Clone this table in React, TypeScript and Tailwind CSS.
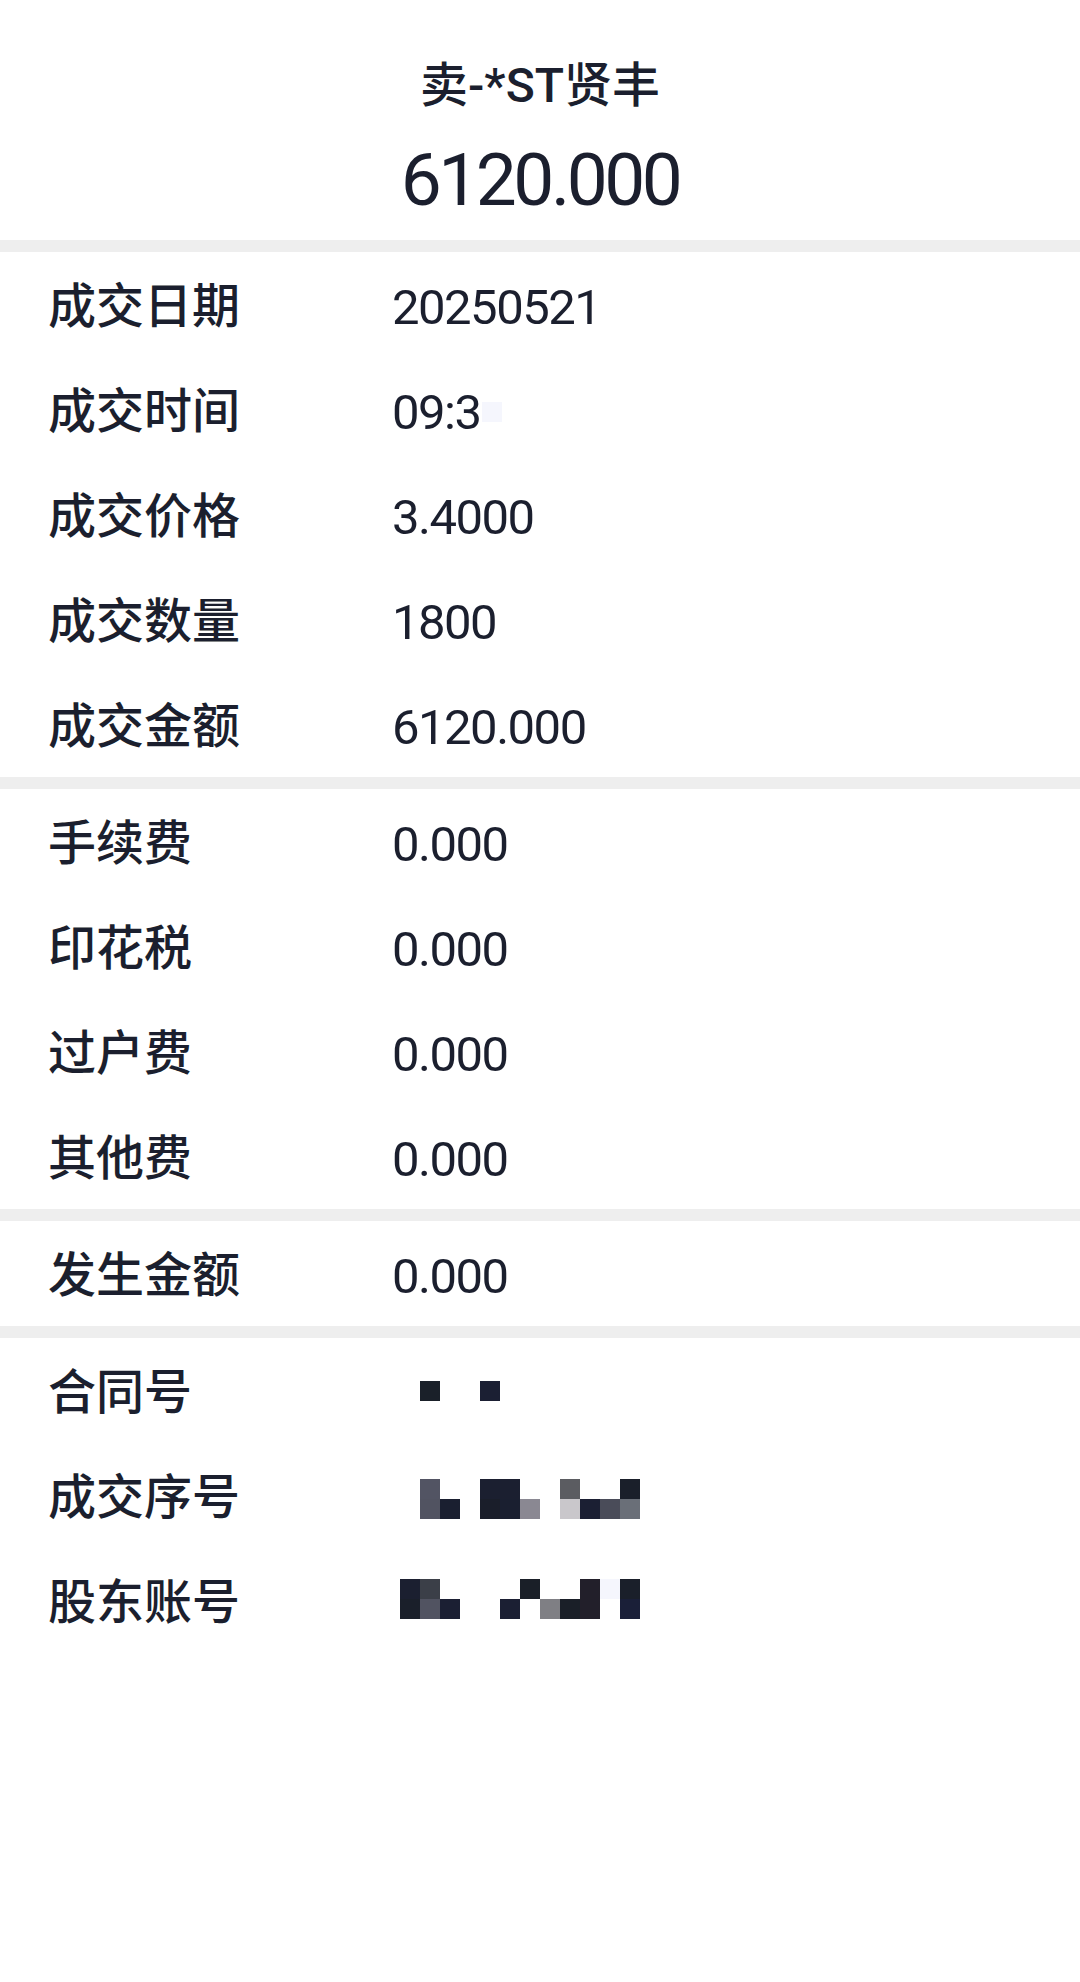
import React from 'react';

const font = "font-['Roboto','Noto_Sans_CJK_SC',sans-serif]";

type Cell = [number, number, string]; // col, row, colour

const Mosaic = ({ cells, rows = 2, className = "" }: { cells: Cell[]; rows?: number; className?: string }) => (
  <div className={`relative w-[260px] ${rows === 2 ? 'h-[40px]' : 'h-[20px]'} ${className}`}>
    {cells.map(([c, r, color], i) => (
      <div
        key={i}
        className="absolute w-[20px] h-[20px]"
        style={{ left: c * 20, top: r * 20, background: color }}
      />
    ))}
  </div>
);

const Row = ({ label, children }: { label: string; children: React.ReactNode }) => (
  <div className="flex h-[105px] items-center pl-[48px] pt-[5px]">
    <div className="w-[344px] text-[48px] font-medium leading-none text-[#1b1f2e]">{label}</div>
    <div className="flex-1 flex items-center">{children}</div>
  </div>
);

const Val = ({ children }: { children: React.ReactNode }) => (
  <span className="text-[49px] leading-none tracking-[-1.5px] text-[#1b1f2e]">{children}</span>
);

const Sep = () => <div className="h-[12px] bg-[#eeeeee]" />;

const hetong: Cell[] = [
  [1, 0, '#1a2029'],
  [4, 0, '#1b1f33'],
];

const xuhao: Cell[] = [
  [1, 0, '#525463'], [1, 1, '#515361'],
  [2, 1, '#1a1f30'],
  [4, 0, '#1b1f30'], [4, 1, '#1a1e2a'],
  [5, 0, '#1b1f30'], [5, 1, '#1a1f30'],
  [6, 1, '#8a8892'],
  [8, 0, '#5b5c61'], [8, 1, '#c9c7cb'],
  [9, 1, '#1b1f33'],
  [10, 1, '#4a4c59'],
  [11, 0, '#1a1f2a'], [11, 1, '#6a6f78'],
];

const gudong: Cell[] = [
  [0, 0, '#1b1f30'], [0, 1, '#1a1f2a'],
  [1, 0, '#3b3f48'], [1, 1, '#515361'],
  [2, 1, '#1b1f33'],
  [5, 1, '#1b1f33'],
  [6, 0, '#1a1f28'],
  [7, 1, '#7f7f84'],
  [8, 1, '#1a1f28'],
  [9, 0, '#221f2a'], [9, 1, '#221f2a'],
  [10, 0, '#f5f6fd'],
  [11, 0, '#1a1f2a'], [11, 1, '#1a1f38'],
];

export default function App() {
  return (
    <div className={`w-[1080px] min-h-[1982px] bg-white ${font}`}>
      {/* header */}
      <div className="h-[240px] flex flex-col items-center">
        <div className="mt-[62px] text-[48px] font-medium leading-none text-[#1b1f2e]">卖-*ST贤丰</div>
        <div className="mt-[34px] text-[73px] leading-none tracking-[-3.5px] text-[#1b1f2e]">6120.000</div>
      </div>
      <Sep />
      <Row label="成交日期"><Val>20250521</Val></Row>
      <Row label="成交时间">
        <Val>09:3</Val>
        <span className="ml-[2px] inline-block w-[20px] h-[20px] bg-[#f5f6fd]" />
      </Row>
      <Row label="成交价格"><Val>3.4000</Val></Row>
      <Row label="成交数量"><Val>1800</Val></Row>
      <Row label="成交金额"><Val>6120.000</Val></Row>
      <Sep />
      <Row label="手续费"><Val>0.000</Val></Row>
      <Row label="印花税"><Val>0.000</Val></Row>
      <Row label="过户费"><Val>0.000</Val></Row>
      <Row label="其他费"><Val>0.000</Val></Row>
      <Sep />
      <Row label="发生金额"><Val>0.000</Val></Row>
      <Sep />
      <Row label="合同号"><Mosaic cells={hetong} rows={1} className="ml-[8px] mt-[-5px]" /></Row>
      <Row label="成交序号"><Mosaic cells={xuhao} className="ml-[8px] mt-[2px]" /></Row>
      <Row label="股东账号"><Mosaic cells={gudong} className="ml-[8px] mt-[-8px]" /></Row>
    </div>
  );
}
